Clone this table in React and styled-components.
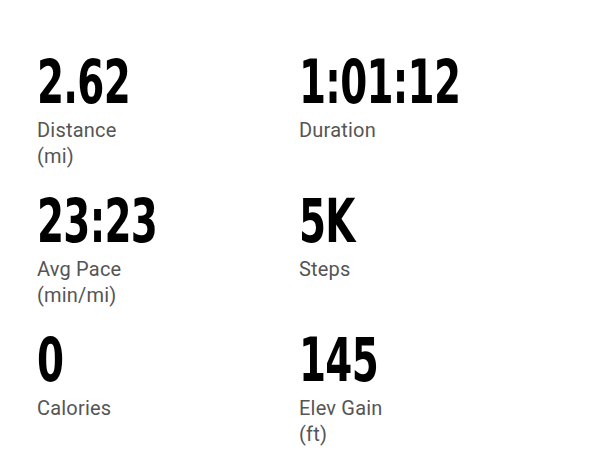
import React from 'react'
import styled, { createGlobalStyle } from 'styled-components'

const GlobalStyle = createGlobalStyle`
  html, body {
    margin: 0;
    padding: 0;
    background: #fff;
  }
`

const StatsGrid = styled.div`
  display: grid;
  grid-template-columns: 262px 1fr;
  row-gap: 22px;
  padding: 52px 0 0 37px;
`

const Stat = styled.div`
  display: flex;
  flex-direction: column;
  align-items: flex-start;
`

// no condensed bold face is installed, so squeeze the condensed DejaVu
const Value = styled.div`
  display: inline-block;
  font-family: "DejaVu Sans Condensed", "DejaVu Sans", sans-serif;
  font-weight: 700;
  font-size: 60px;
  line-height: 60px;
  color: #000;
  white-space: nowrap;
  letter-spacing: -1px;
  transform: scaleX(0.72);
  transform-origin: left top;
`

const Label = styled.div`
  margin-top: 5px;
  font-family: Roboto, "Liberation Sans", sans-serif;
  font-size: 20px;
  line-height: 26px;
  color: #555;
  letter-spacing: 0.2px;
`

const stats = [
  { value: '2.62', label: ['Distance', '(mi)'] },
  { value: '1:01:12', label: ['Duration'] },
  { value: '23:23', label: ['Avg Pace', '(min/mi)'] },
  { value: '5K', label: ['Steps'] },
  { value: '0', label: ['Calories'] },
  { value: '145', label: ['Elev Gain', '(ft)'] }
]

export default function App () {
  return (
    <>
      <GlobalStyle />
      <StatsGrid>
        {stats.map(s => (
          <Stat key={s.label[0]}>
            <Value>{s.value}</Value>
            <Label>
              {s.label.map(l => <div key={l}>{l}</div>)}
            </Label>
          </Stat>
        ))}
      </StatsGrid>
    </>
  )
}
